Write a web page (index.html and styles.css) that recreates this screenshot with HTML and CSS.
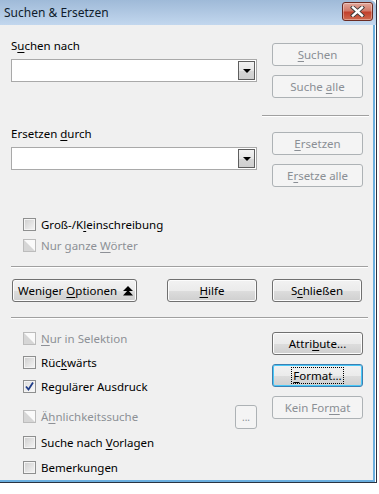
FILE: index.html
```html
<!DOCTYPE html>
<html lang="de">
<head>
<meta charset="utf-8">
<title>Suchen &amp; Ersetzen</title>
<link rel="stylesheet" href="styles.css">
</head>
<body>
<div class="window">
  <div class="titlebar">
    <span class="title">Suchen &amp; Ersetzen</span>
    <span class="close">
      <svg width="17" height="11" viewBox="0 0 17 11">
        <path d="M4 1.5 L13 9.5 M13 1.5 L4 9.5" stroke="#3a3a3a" stroke-width="4.2" stroke-linecap="square"/>
        <path d="M4 1.5 L13 9.5 M13 1.5 L4 9.5" stroke="#ffffff" stroke-width="2.4" stroke-linecap="square"/>
      </svg>
    </span>
  </div>
  <div class="client">
    <div class="row find">
      <div class="field">
        <div class="lbl">S<u>u</u>chen nach</div>
        <div class="combo"><span class="drop"><i class="tri"></i></span></div>
      </div>
      <div class="btncol">
        <button class="btn dis"><span><u>S</u>uchen</span></button>
        <button class="btn dis"><span>Suche <u>a</u>lle</span></button>
      </div>
    </div>
    <div class="sep sep-right"></div>
    <div class="row replace">
      <div class="field">
        <div class="lbl">Ersetzen <u>d</u>urch</div>
        <div class="combo"><span class="drop"><i class="tri"></i></span></div>
      </div>
      <div class="btncol">
        <button class="btn dis"><span><u>E</u>rsetzen</span></button>
        <button class="btn dis"><span>E<u>r</u>setze alle</span></button>
      </div>
    </div>
    <div class="checks top">
      <div class="check"><span class="box"></span><span>Groß-/K<u>l</u>einschreibung</span></div>
      <div class="check disabled"><span class="box"></span><span>Nur ganze <u>W</u>örter</span></div>
    </div>
    <div class="sep sep-full"></div>
    <div class="row actions">
      <button class="btn wide"><span>Weniger <u>O</u>ptionen</span><svg class="dbl" width="10" height="10" viewBox="0 0 10 10"><path d="M5 0 L10 5 L0 5 Z M5 4 L10 9.5 L0 9.5 Z" fill="#000"/></svg></button>
      <button class="btn"><span><u>H</u>ilfe</span></button>
      <button class="btn"><span>S<u>c</u>hließen</span></button>
    </div>
    <div class="sep sep-full"></div>
    <div class="row more">
      <div class="checks bottom">
        <div class="check disabled"><span class="box"></span><span><u>N</u>ur in Selektion</span></div>
        <div class="check"><span class="box"></span><span>Rüc<u>k</u>wärts</span></div>
        <div class="check"><span class="box checked"><svg width="11" height="11" viewBox="0 0 11 11"><path d="M2 5.5 L4.5 8.5 L9 1.5" fill="none" stroke="#1f3c88" stroke-width="1.8"/></svg></span><span>Regulärer Ausdruck</span></div>
        <div class="check disabled tall"><span class="box"></span><span>Ä<u>h</u>nlichkeitssuche</span><button class="btn dis dots"><span>...</span></button></div>
        <div class="check tall2"><span class="box"></span><span>Suche nach <u>V</u>orlagen</span></div>
        <div class="check"><span class="box"></span><span>Bemerkungen</span></div>
      </div>
      <div class="btncol">
        <button class="btn"><span>Attri<u>b</u>ute...</span></button>
        <button class="btn focus"><span class="focusrect"><u>F</u>ormat...</span></button>
        <button class="btn dis"><span>Kein For<u>m</u>at</span></button>
      </div>
    </div>
  </div>
</div>
</body>
</html>
```

FILE: styles.css
```css
html, body {
  margin: 0;
  padding: 0;
  background: #ffffff;
}
body {
  font-family: "Noto Sans", "Open Sans", sans-serif;
  font-size: 11.5px;
  color: #000;
}
u { text-decoration: underline; text-underline-offset: 2px; }

.window {
  width: 376px;
  border-right: 1px solid #2a3442;
  border-bottom: 1px solid #2a3442;
}
.titlebar {
  height: 25px;
  display: flex;
  align-items: center;
  justify-content: space-between;
  padding: 0 3px 0 4px;
  background: linear-gradient(#9fbad8, #b4cbe5 60%, #c2d7ee);
  border-top-right-radius: 6px;
}
.title { color: #0f1c2c; font-size: 12px; }
.close {
  width: 29px;
  height: 17px;
  margin-top: -2px;
  border: 1px solid #6b2b22;
  border-radius: 3px;
  background: linear-gradient(#e2a89c, #d27a69 45%, #c2412d 55%, #cf6a4f);
  box-shadow: inset 0 0 0 1px rgba(255,255,255,0.35);
  display: flex;
  align-items: center;
  justify-content: center;
}
.client {
  height: 442px;
  background: #f0f0f0;
  padding: 13px 0 0 11px;
  border-right: 2px solid #6aaede;
  border-bottom: 2px solid #6aaede;
  width: 362px;
}
.row { display: flex; }
.field { width: 246px; }
.lbl { height: 16px; line-height: 16px; margin-bottom: 5px; }
.combo {
  height: 21px;
  border: 1px solid #a9a9a9;
  background: #fff;
  display: flex;
  justify-content: flex-end;
  align-items: center;
  padding-right: 1px;
}
.drop {
  width: 15px;
  height: 17px;
  border: 1px solid #5e5e5e;
  background: linear-gradient(#f2f2f2, #e6e6e6 50%, #d6d6d6 51%, #cfcfcf);
  display: flex;
  align-items: center;
  justify-content: center;
}
.tri {
  width: 0; height: 0;
  border-left: 4px solid transparent;
  border-right: 4px solid transparent;
  border-top: 4px solid #000;
}
.btncol {
  margin-left: 15px;
  display: flex;
  flex-direction: column;
  gap: 9px;
}
.find .btncol { margin-top: 5px; }
.replace .btncol { margin-top: 6px; }
.btn {
  font: inherit;
  color: #000;
  width: 91px;
  height: 23px;
  padding: 0;
  border: 1px solid #707070;
  border-radius: 3px;
  background: linear-gradient(#f2f2f2, #ebebeb 50%, #dddddd 51%, #cfcfcf);
  box-shadow: inset 0 0 0 1px #fcfcfc;
  display: flex;
  align-items: center;
  justify-content: center;
  white-space: nowrap;
}
.btn.dis {
  color: #8a8f95;
  border-color: #adb2b5;
  background: #f4f4f4;
  box-shadow: none;
}
.btn.focus {
  border-color: #3c7fb1;
  box-shadow: inset 0 0 0 1px #48c8f8;
}
.focusrect {
  outline: 1px dotted #000;
  outline-offset: 0;
  padding: 0 1px;
  line-height: 15px;
}
.sep {
  height: 0;
  border-top: 1px solid #a0a0a0;
  border-bottom: 1px solid #ffffff;
}
.sep-right { margin: 17px 0 0 251px; width: 107px; }
.sep-full { width: 357px; }
.replace { margin-top: 9px; }
.checks.top { margin: 27px 0 0 12px; }
.check {
  display: flex;
  align-items: center;
  height: 21px;
  gap: 5px;
  white-space: nowrap;
}
.box {
  width: 11px;
  height: 11px;
  border: 1px solid #8e8f8f;
  background: linear-gradient(135deg, #cdcdcd, #f6f6f6);
  box-shadow: inset 0 0 0 1px #f4f4f4;
  display: flex;
  align-items: center;
  justify-content: center;
}
.box.checked { background: linear-gradient(135deg, #dcdcdc, #fafafa); }
.check.disabled { color: #8d9096; }
.check.disabled .box {
  border-color: #bcbcbc;
  background: linear-gradient(to top right, #d6d6d6 48%, #fafafa 52%);
  box-shadow: none;
}
.checks.top + .sep-full { margin-top: 10px; }
.actions { margin: 11px 0 0 1px; }
.actions .btn.wide {
  width: 125px;
  justify-content: flex-start;
  padding-left: 5px;
  gap: 6px;
}
.actions .btn:nth-child(2) { margin-left: 30px; width: 90px; }
.actions .btn:nth-child(3) { margin-left: 15px; width: 90px; }
.actions + .sep-full { margin-top: 15px; }
.more { height: 170px; }
.checks.bottom { width: 234px; margin: 7px 0 0 12px; }
.checks.bottom .check { height: 24px; }
.checks.bottom .check.tall { height: 26px; margin-top: 5px; }
.checks.bottom .check.tall2 { height: 26px; }
.dots {
  width: 22px;
  height: 24px;
  margin-left: auto;
  align-self: flex-end;
  font-size: 10px;
  border-radius: 3px;
}
.more .btncol { margin: 13px 0 0 15px; }
```
